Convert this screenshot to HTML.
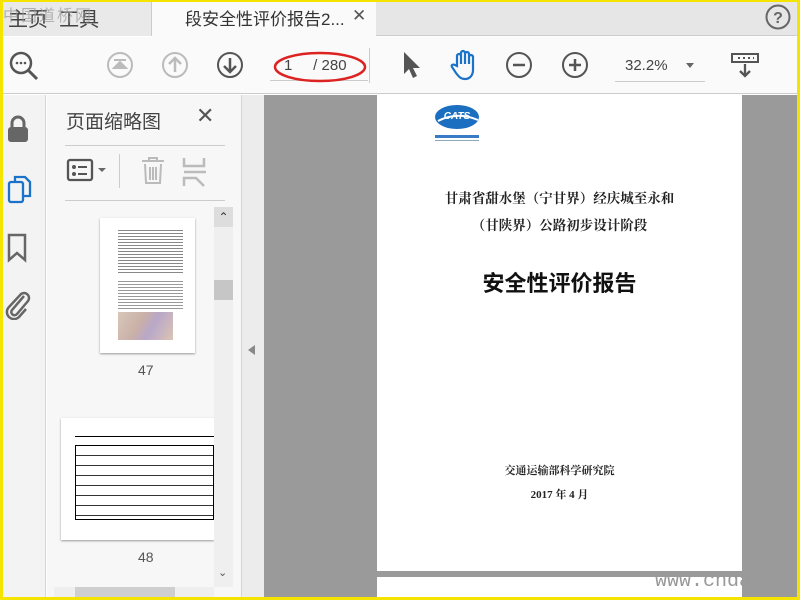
<!DOCTYPE html>
<html><head><meta charset="utf-8"><style>
*{margin:0;padding:0;box-sizing:border-box}
body{width:800px;height:600px;overflow:hidden;position:relative;background:#fff;font-family:"Liberation Sans","Noto Sans CJK SC",sans-serif}
.a{position:absolute}
.cn{font-family:"Liberation Serif","Noto Serif CJK SC",serif;font-weight:bold;color:#222}
</style></head><body>
<div class="a" style="left:0;top:0;width:800px;height:36px;background:#e6e6e6;border-bottom:1px solid #ccc"></div>
<div class="a" style="left:0;top:0;width:152px;height:36px;background:#e9e9e9;border-right:1px solid #ccc"></div>
<div class="a" style="left:8px;top:3px;font-size:20px;color:#444">主页&nbsp;&nbsp;工具</div>
<div class="a" style="left:3px;top:2px;font-size:16px;color:#999;opacity:.7;letter-spacing:2px">中国道桥网</div>
<div class="a" style="left:152px;top:0;width:224px;height:37px;background:#fafafa"></div>
<div class="a" style="left:185px;top:5px;font-size:17px;color:#333">段安全性评价报告2...</div>
<div class="a" style="left:352px;top:6px;font-size:17px;color:#555">✕</div>
<svg class="a" style="left:764px;top:3px" width="28" height="28"><circle cx="14" cy="14" r="11.5" fill="none" stroke="#666" stroke-width="2"/><text x="14" y="20" font-size="16" text-anchor="middle" fill="#666" font-weight="bold" font-family="Liberation Sans">?</text></svg>
<div class="a" style="left:0;top:37px;width:800px;height:57px;background:#fafafa;border-bottom:1px solid #ccc"></div>
<svg class="a" style="left:8px;top:50px" width="32" height="32"><circle cx="13" cy="13" r="10" fill="none" stroke="#555" stroke-width="2.5"/><line x1="20" y1="20" x2="29" y2="29" stroke="#555" stroke-width="3"/><circle cx="9" cy="13" r="1.3" fill="#555"/><circle cx="13" cy="13" r="1.3" fill="#555"/><circle cx="17" cy="13" r="1.3" fill="#555"/></svg>
<svg class="a" style="left:106px;top:51px" width="28" height="28"><circle cx="14" cy="14" r="12" fill="none" stroke="#bbb" stroke-width="2"/><path d="M8 17 L14 11 L20 17Z M8 9 H20" stroke="#bbb" fill="#bbb" stroke-width="2"/></svg>
<svg class="a" style="left:161px;top:51px" width="28" height="28"><circle cx="14" cy="14" r="12" fill="none" stroke="#bbb" stroke-width="2"/><path d="M14 21 V7 M8 13 L14 7 L20 13" stroke="#bbb" fill="none" stroke-width="2.5"/></svg>
<svg class="a" style="left:216px;top:51px" width="28" height="28"><circle cx="14" cy="14" r="12" fill="none" stroke="#555" stroke-width="2"/><path d="M14 7 V21 M8 15 L14 21 L20 15" stroke="#555" fill="none" stroke-width="2.5"/></svg>
<div class="a" style="left:270px;top:80px;width:98px;height:1px;background:#ccc"></div>
<div class="a" style="left:369px;top:48px;width:1px;height:35px;background:#ccc"></div>
<div class="a" style="left:284px;top:57px;font-size:15px;color:#444">1&nbsp;&nbsp;&nbsp;&nbsp;&nbsp;/ 280</div>
<svg class="a" style="left:270px;top:46px" width="100" height="42"><ellipse cx="50" cy="21" rx="45" ry="14" fill="none" stroke="#d22" stroke-width="2.5"/></svg>
<svg class="a" style="left:400px;top:50px" width="24" height="30"><path d="M4 2 L4 24 L9 19 L13 28 L17 26 L13 18 L20 18Z" fill="#555"/></svg>
<svg class="a" style="left:449px;top:48px" width="32" height="34"><path d="M8 18 V8 a2 2 0 0 1 4 0 V16 V5 a2 2 0 0 1 4 0 V16 V6 a2 2 0 0 1 4 0 V16 V9 a2 2 0 0 1 4 0 V22 c0 5 -3 9 -8 9 c-4 0 -6 -2 -9 -6 l-4 -6 c-1 -2 1 -3 3 -2z" fill="none" stroke="#1a73c8" stroke-width="2.2"/></svg>
<svg class="a" style="left:505px;top:51px" width="28" height="28"><circle cx="14" cy="14" r="12" fill="none" stroke="#555" stroke-width="2"/><line x1="8" y1="14" x2="20" y2="14" stroke="#555" stroke-width="2.5"/></svg>
<svg class="a" style="left:561px;top:51px" width="28" height="28"><circle cx="14" cy="14" r="12" fill="none" stroke="#555" stroke-width="2"/><path d="M8 14 H20 M14 8 V20" stroke="#555" stroke-width="2.5"/></svg>
<div class="a" style="left:625px;top:57px;font-size:15px;color:#444">32.2%</div>
<div class="a" style="left:686px;top:63px;border:4px solid transparent;border-top:5px solid #666"></div>
<div class="a" style="left:615px;top:81px;width:90px;height:1px;background:#ccc"></div>
<svg class="a" style="left:730px;top:52px" width="30" height="28"><rect x="2" y="2" width="26" height="8" fill="none" stroke="#555" stroke-width="2"/><path d="M8 6h2M13 6h2M18 6h2M23 6h1" stroke="#555" stroke-width="2"/><path d="M15 12 V24 M10 19 L15 24 L20 19" stroke="#555" fill="none" stroke-width="2.3"/></svg>
<div class="a" style="left:0;top:95px;width:46px;height:505px;background:#f3f3f3;border-right:1px solid #d5d5d5"></div>
<svg class="a" style="left:6px;top:115px" width="24" height="30"><path d="M6 12 V8 a6 6 0 0 1 12 0 V12" fill="none" stroke="#666" stroke-width="3"/><rect x="2" y="12" width="20" height="15" rx="3" fill="#666"/></svg>
<svg class="a" style="left:7px;top:174px" width="26" height="30"><rect x="2" y="8" width="14" height="20" rx="2" fill="none" stroke="#1a73c8" stroke-width="2.3"/><path d="M8 8 V3 H18 L23 8 V22 H16" fill="none" stroke="#1a73c8" stroke-width="2.3"/></svg>
<svg class="a" style="left:7px;top:233px" width="22" height="30"><path d="M2 2 H18 V27 L10 20 L2 27Z" fill="none" stroke="#666" stroke-width="2.5"/></svg>
<svg class="a" style="left:4px;top:290px" width="28" height="30"><path d="M20 6 L8 20 a3 3 0 0 0 5 4 L24 11 a5 5 0 0 0 -7 -7 L5 17 a7 7 0 0 0 10 10 L22 19" fill="none" stroke="#666" stroke-width="2.5"/></svg>
<div class="a" style="left:47px;top:95px;width:194px;height:505px;background:#f7f7f7"></div>
<div class="a" style="left:66px;top:107px;font-size:19px;color:#444">页面缩略图</div>
<div class="a" style="left:196px;top:103px;font-size:22px;color:#555">✕</div>
<div class="a" style="left:65px;top:145px;width:160px;height:1px;background:#ccc"></div>
<div class="a" style="left:65px;top:200px;width:160px;height:1px;background:#ccc"></div>
<div class="a" style="left:119px;top:154px;width:1px;height:34px;background:#ccc"></div>
<svg class="a" style="left:66px;top:158px" width="44" height="26"><rect x="2" y="2" width="24" height="20" rx="2" fill="none" stroke="#555" stroke-width="2.3"/><circle cx="8" cy="9" r="2" fill="#555"/><circle cx="8" cy="16" r="2" fill="#555"/><path d="M12 9h9M12 16h9" stroke="#555" stroke-width="2"/><path d="M32 10 L40 10 L36 14Z" fill="#666"/></svg>
<svg class="a" style="left:140px;top:156px" width="28" height="30"><path d="M2 5 H24 M9 5 V2 H17 V5 M5 8 L6 27 H20 L21 8 M10 11 V24 M13 11 V24 M16 11 V24" fill="none" stroke="#bbb" stroke-width="2"/></svg>
<svg class="a" style="left:182px;top:156px" width="26" height="32"><path d="M2 2 V10 H22 V2 M2 16 H24 M2 30 V22 H14 L22 30" fill="none" stroke="#bbb" stroke-width="2.5"/></svg>
<div class="a" style="left:100px;top:218px;width:95px;height:135px;background:#fff;box-shadow:0 1px 2px #999;overflow:hidden">
<div style="margin:10px 12px 0 18px;height:45px;background:repeating-linear-gradient(#fff 0 2px,#888 2px 3px)"></div>
<div style="margin:6px 12px 0 18px;height:30px;background:repeating-linear-gradient(#fff 0 2px,#999 2px 3px)"></div>
<div style="margin:3px 22px 0 18px;height:28px;background:linear-gradient(120deg,#d9c7b9,#c9b0a8 40%,#b8a7c9 60%,#dcc4b4)"></div>
</div>
<div class="a" style="left:138px;top:362px;font-size:14px;color:#555">47</div>
<div class="a" style="left:61px;top:418px;width:153px;height:122px;background:#fff;box-shadow:0 1px 2px #999;overflow:hidden">
<div style="margin:18px 0 0 14px;height:1px;background:#000"></div>
<div style="margin:8px 0 0 14px;height:75px;border:1px solid #000;background:repeating-linear-gradient(#fff 0 9px,#333 9px 10px),#fff"></div>
</div>
<div class="a" style="left:138px;top:549px;font-size:14px;color:#555">48</div>
<div class="a" style="left:214px;top:207px;width:19px;height:380px;background:#efefef"></div>
<div class="a" style="left:214px;top:207px;width:19px;height:20px;background:#ddd;text-align:center;font-size:12px;line-height:20px;color:#333">⌃</div>
<div class="a" style="left:214px;top:280px;width:19px;height:20px;background:#c6c6c6"></div>
<div class="a" style="left:218px;top:566px;font-size:11px;color:#555">⌄</div>
<div class="a" style="left:54px;top:587px;width:160px;height:13px;background:#efefef"></div>
<div class="a" style="left:75px;top:587px;width:100px;height:13px;background:#cfcfcf"></div>
<div class="a" style="left:241px;top:95px;width:23px;height:505px;background:#ececec;border-left:1px solid #d5d5d5"></div>
<div class="a" style="left:248px;top:345px;border:5px solid transparent;border-right:7px solid #888;border-left:0"></div>
<div class="a" style="left:264px;top:95px;width:536px;height:505px;background:#9a9a9a"></div>
<div class="a" style="left:377px;top:95px;width:365px;height:476px;background:#fff"></div>
<div class="a" style="left:377px;top:577px;width:365px;height:23px;background:#fff"></div>
<svg class="a" style="left:434px;top:103px" width="48" height="42"><ellipse cx="23" cy="14" rx="22" ry="12" fill="#1b6fc0"/><path d="M4 18 Q23 8 44 17" stroke="#fff" stroke-width="2" fill="none"/><text x="23" y="16" font-size="10" fill="#fff" font-style="italic" font-weight="bold" text-anchor="middle" font-family="Liberation Sans">CATS</text><rect x="1" y="32" width="44" height="3" fill="#3a7bc8"/><rect x="1" y="37" width="44" height="1" fill="#8ab"/></svg>
<div class="a cn" style="left:377px;width:365px;top:187px;text-align:center;font-size:13.5px">甘肃省甜水堡（宁甘界）经庆城至永和</div>
<div class="a cn" style="left:377px;width:365px;top:214px;text-align:center;font-size:13.5px">（甘陕界）公路初步设计阶段</div>
<div class="a" style="left:377px;width:365px;top:266px;text-align:center;font-size:22px;font-weight:bold;color:#111;font-family:'Liberation Sans','Noto Sans CJK SC',sans-serif">安全性评价报告</div>
<div class="a cn" style="left:377px;width:365px;top:462px;text-align:center;font-size:11px">交通运输部科学研究院</div>
<div class="a cn" style="left:377px;width:365px;top:486px;text-align:center;font-size:11px">2017 年 4 月</div>
<div class="a" style="left:655px;top:570px;font-size:20px;color:#999;font-family:'Liberation Mono',monospace">www.cndac</div>
<div class="a" style="left:0;top:0;width:800px;height:600px;border:3px solid #f5e400;border-top-width:2px;border-left-width:3px"></div>
</body></html>
